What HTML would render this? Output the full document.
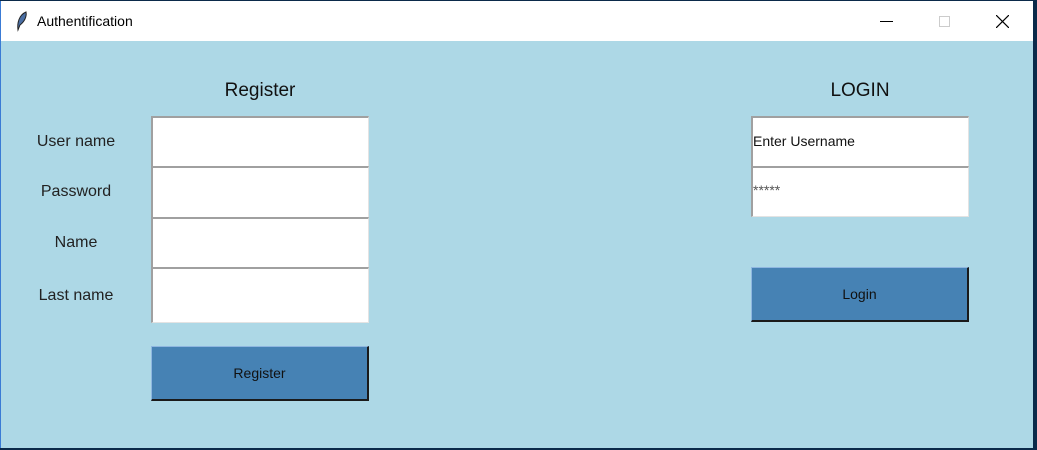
<!DOCTYPE html><html><head><style>
*{margin:0;padding:0;box-sizing:border-box}
body{width:1037px;height:450px;background:#0b2a4a;position:relative;overflow:hidden;font-family:"Liberation Sans",sans-serif}
.win{position:absolute;left:0px;top:1px;width:1033px;height:447px;background:#add8e6;border-left:1px solid #3a7bd5}
.tb{position:absolute;left:0;top:0;width:100%;height:40px;background:#fff}
.t{position:absolute;font-size:14px;color:#000}
.l{position:absolute;font-size:16px;color:#222;width:120px;text-align:center}
.e{position:absolute;background:#fff;border-top:2px solid #a0a0a0;border-left:2px solid #a0a0a0;border-right:1px solid #e3e3e3;border-bottom:1px solid #e3e3e3;font-size:14px;color:#111;padding-left:0px}
.b{position:absolute;background:#4682b4;border-top:1px solid #8fb7e0;border-left:1px solid #8fb7e0;border-right:2px solid #1a1a1a;border-bottom:2px solid #1a1a1a;font-size:14px;color:#111;display:flex;align-items:center;justify-content:center}
.h{position:absolute;font-size:19px;color:#111;width:160px;text-align:center}
</style></head><body>
<div class="win">
<div class="tb">
<svg style="position:absolute;left:14px;top:10px" width="14" height="22" viewBox="0 0 14 22"><path d="M11 1 C4 4 2 12 3 19 L5 14 C9 11 12 6 11 1Z" fill="#4a6fa5" stroke="#222" stroke-width="1"/></svg>
<div class="t" style="left:36px;top:12px">Authentification</div>
<div style="position:absolute;left:879px;top:20px;width:13px;height:1px;background:#000"></div>
<div style="position:absolute;left:938px;top:15px;width:11px;height:11px;border:1px solid #ccc"></div>
<svg style="position:absolute;left:995px;top:14px" width="13" height="13"><path d="M0 0L13 13M13 0L0 13" stroke="#000" stroke-width="1.2"/></svg>
</div>
<div class="h" style="left:179px;top:79px">Register</div>
<div class="h" style="left:779px;top:79px">LOGIN</div>
<div class="l" style="left:15px;top:132px">User name</div>
<div class="l" style="left:15px;top:182px">Password</div>
<div class="l" style="left:15px;top:233px">Name</div>
<div class="l" style="left:15px;top:286px">Last name</div>
<div class="e" style="left:150px;top:115px;width:218px;height:51px"></div>
<div class="e" style="left:150px;top:165px;width:218px;height:52px"></div>
<div class="e" style="left:150px;top:216px;width:218px;height:51px"></div>
<div class="e" style="left:150px;top:266px;width:218px;height:56px"></div>
<div class="b" style="left:150px;top:345px;width:218px;height:55px">Register</div>
<div class="e" style="left:750px;top:115px;width:218px;height:51px;padding-top:15px">Enter Username</div>
<div class="e" style="left:750px;top:165px;width:218px;height:51px;padding-top:14px;font-size:14px;color:#555">*****</div>
<div class="b" style="left:750px;top:266px;width:218px;height:55px">Login</div>
</div>
</body></html>
